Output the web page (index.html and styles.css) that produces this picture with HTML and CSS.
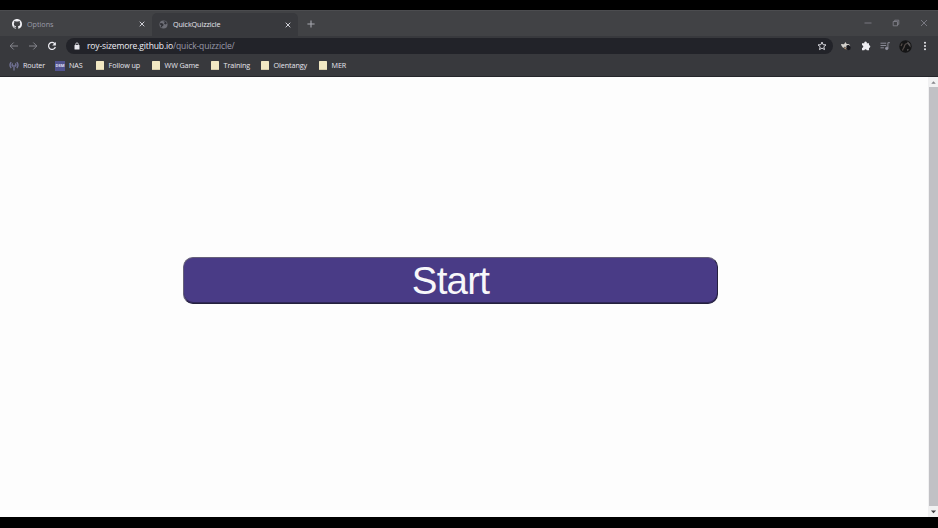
FILE: index.html
```html
<!DOCTYPE html>
<html lang="en">
<head>
<meta charset="utf-8">
<title>QuickQuizzicle</title>
<link rel="stylesheet" href="styles.css">
</head>
<body>
<div class="browser">
  <header class="tabs">
    <div class="tab first">
      <svg class="github" viewBox="0 0 16 16"><path fill="currentColor" d="M8 0C3.58 0 0 3.58 0 8c0 3.54 2.29 6.53 5.47 7.59.4.07.55-.17.55-.38v-1.49c-2.01.37-2.53-.49-2.69-.94-.09-.23-.48-.94-.82-1.13-.28-.15-.68-.52-.01-.53.63-.01 1.08.58 1.23.82.72 1.21 1.87.87 2.33.66.07-.52.28-.87.51-1.07-1.78-.2-3.64-.89-3.64-3.95 0-.87.31-1.59.82-2.15-.08-.2-.36-1.02.08-2.12 0 0 .67-.21 2.2.82a7.4 7.4 0 0 1 4 0c1.53-1.04 2.2-.82 2.2-.82.44 1.1.16 1.92.08 2.12.51.56.82 1.27.82 2.15 0 3.07-1.87 3.75-3.65 3.95.29.25.54.73.54 1.48v2.2c0 .21.15.46.55.38A8 8 0 0 0 16 8c0-4.42-3.58-8-8-8Z"/></svg>
      <span class="title dim">Options</span>
      <svg class="close" viewBox="0 0 6 6"><path d="m.7.7 4.6 4.6M5.3.7.7 5.3"/></svg>
    </div>
    <div class="tab active">
      <svg class="globe" viewBox="0 0 9 9"><circle cx="4.5" cy="4.5" r="4" fill="#6d6e76"/><path fill="#303137" d="m1.300 3 2 .3 1.300 1.300-.5 1.500-1 .2v1.400L1.500 6.500l1-.9-1.500-1zM4.300 1l2.800.8.7 1.900-1.500.7L5 3.500l.7-.9z"/></svg>
      <span class="title">QuickQuizzicle</span>
      <svg class="close" viewBox="0 0 6 6"><path d="m.7.7 4.6 4.6M5.3.7.7 5.3"/></svg>
    </div>
    <svg class="plus" viewBox="0 0 8 8"><path d="M4 .4v7.200M.4 4h7.200"/></svg>
    <div class="controls">
      <svg class="win" viewBox="0 0 8 8"><path d="M.5 4h7"/></svg>
      <svg class="win" viewBox="0 0 8 8"><path d="M1.200 2.500h4.300v4.300H1.200zM2.700 2.500V1.200h4.100v4.100H5.500"/></svg>
      <svg class="win" viewBox="0 0 8 8"><path d="m1 1 6 6m0-6L1 7"/></svg>
    </div>
  </header>
  <div class="toolbar">
    <svg class="nav" viewBox="0 0 10 10"><path d="M9 5H1.200M4.700 1.500 1.200 5l3.500 3.500"/></svg>
    <svg class="nav" viewBox="0 0 10 10"><path d="M1 5h7.800M5.300 1.500 8.800 5 5.300 8.500"/></svg>
    <svg class="nav reload" viewBox="0 0 10 10"><path d="M8 3A3.500 3.500 0 1 0 8.400 6"/><path class="solid" d="M8.900.9v3.700H5.200z"/></svg>
    <div class="address">
      <svg class="lock" viewBox="0 0 6 8"><path d="M1.700 3.500V2.200a1.300 1.300 0 0 1 2.600 0v1.300" fill="none" stroke="#e6e6ec" stroke-width=".8"/><rect x=".5" y="3" width="5" height="4.400" rx=".5" fill="#e6e6ec"/></svg>
      <span class="url">roy-sizemore.github.io<span>/quick-quizzicle/</span></span>
      <svg class="star" viewBox="0 0 10 10"><path d="m5 1 1.100 2.700 2.900.2-2.200 1.900.7 2.800L5 7.100 2.500 8.600l.7-2.800L1 3.900l2.900-.2z"/></svg>
    </div>
    <div class="tools">
      <svg class="tool eagle" viewBox="0 0 12 12"><path fill="#d3d1cc" d="m1 4 3 .2L5.500 2l1.200 2H9l1.500 2.500L8.700 8H6L5 6.500 3.200 8 1.500 5.800z"/><path fill="#17171d" d="m6.300 5.700 2-.9 2.500 1.700-.5 3-2.200.8L6.500 8.500z"/><path fill="#aa8f73" d="m3.700 7.500 2 .1 1 1.800-2-.4z"/></svg>
      <svg class="tool puzzle" viewBox="0 0 10 10"><path fill="#eeeef2" d="M1 2.200h2.300a1.300 1.300 0 1 1 2.500 0H8v2.100a1.300 1.300 0 1 1 0 2.600v2.300H5.800a1.300 1.300 0 0 0-2.500 0H1V6.900a1.300 1.300 0 0 0 0-2.600z"/></svg>
      <svg class="tool media" viewBox="0 0 10 10"><path d="M.5 2.200h5.700M.5 4.500h5.700M.5 6.800h3.400M7.900 7.400V1.700h2"/><circle cx="6.700" cy="7.400" r="1.200" fill="#9393a0"/></svg>
      <svg class="tool avatar" viewBox="0 0 13 13"><circle cx="6.500" cy="6.500" r="6.200" fill="#151516"/><path d="M3.500 10.500c.5-2 1.500-2.500 2-4.500.3-1.500 1.500-2.500 3-2.500M2 6l1.200-2.500" fill="none" stroke="#544c49" stroke-width="1.200"/><path d="m8.700 1.600 2.600 2.600.3 3.200-1.500-1.700-2-2.500zM8 9l2 .5-1.500 1.800z" fill="#5b5859"/></svg>
      <svg class="tool dots" viewBox="0 0 4 10"><circle cx="2" cy="1.700" r="1"/><circle cx="2" cy="5" r="1"/><circle cx="2" cy="8.300" r="1"/></svg>
    </div>
  </div>
  <nav class="bookmarks">
    <div class="bookmark router"><svg viewBox="0 0 10 10"><path d="M2.200 1.200Q-.2 4 2.200 7M3.700 2.500q-1.200 1.500 0 3M7.800 1.200q2.400 2.800 0 5.800M6.300 2.500q1.200 1.500 0 3M5 4v5.500" fill="none" stroke="#74759a" stroke-width="1.300"/></svg><span>Router</span></div>
    <div class="bookmark nas"><b>DSM</b><span>NAS</span></div>
    <div class="bookmark follow"><i></i><span>Follow up</span></div>
    <div class="bookmark game"><i></i><span>WW Game</span></div>
    <div class="bookmark training"><i></i><span>Training</span></div>
    <div class="bookmark olentangy"><i></i><span>Olentangy</span></div>
    <div class="bookmark mer"><i></i><span>MER</span></div>
  </nav>
  <div class="viewport">
    <main><button class="start" type="button">Start</button></main>
    <div class="scrollbar">
      <svg class="arrow up" viewBox="0 0 8 8"><path d="m2 5.500 2-2.200 2 2.200z"/></svg>
      <div class="thumb"></div>
      <svg class="arrow down" viewBox="0 0 8 8"><path d="m1.700 3 2.300 2.500L6.300 3z"/></svg>
    </div>
  </div>
</div>
</body>
</html>
```
FILE: styles.css
```css
* { box-sizing: border-box; }
body { margin: 0; background: #000; font-family: "Open Sans", "Noto Sans", sans-serif; font-size: 7.2px; color: #e6e6ee; overflow: hidden; }
svg { display: block; flex: none; }
.browser { height: 528px; padding: 10px 0 11px; display: flex; flex-direction: column; }
.tabs { height: 26px; flex: none; display: flex; align-items: center; background: #414245; border-top: 1px solid #4b4c4f; }
.tab { height: 23px; display: flex; align-items: center; }
.first { width: 152px; padding: 1px 7px 0 12px; }
.active { width: 146px; align-self: flex-end; padding: 0 7px; background: #38393d; border-radius: 5px 5px 0 0; }
.github { width: 10px; height: 10px; color: #f0f0f5; }
.globe { width: 9px; height: 9px; }
.title { margin-left: 5px; flex: 1; line-height: 10px; padding-bottom: 1px; white-space: nowrap; letter-spacing: -.09px; }
.dim { color: #9a9ba7; letter-spacing: 0; }
.close { width: 6px; height: 6px; fill: none; stroke: #cfcfd6; stroke-width: 1; }
.plus { width: 8px; height: 8px; margin: 1px 0 0 9px; fill: none; stroke: #a7a8b0; stroke-width: 1.1; }
.controls { margin-left: auto; display: flex; gap: 20px; padding: 0 10px 1px 0; }
.win { width: 8px; height: 8px; fill: none; stroke: #868791; stroke-width: .8; }
.toolbar { height: 20px; flex: none; display: flex; align-items: center; background: #38393d; padding-left: 9px; }
.nav { width: 10px; height: 10px; margin-right: 9px; fill: none; stroke: #85868d; stroke-width: 1; }
.reload { stroke: #ececf2; stroke-width: 1.2; }
.solid { fill: #ececf2; stroke: none; }
.address { width: 767px; height: 16px; border-radius: 8px; background: #222329; display: flex; align-items: center; padding: 0 6px 0 8px; }
.lock { width: 6px; height: 8px; }
.url { margin-left: 7px; flex: 1; font-size: 8.5px; letter-spacing: -.13px; line-height: 16px; color: #f0f0f7; }
.url span { color: #9a9ba9; }
.star { width: 10px; height: 10px; fill: none; stroke: #d7d7dd; stroke-width: 1; }
.tools { margin-left: 7px; display: flex; align-items: center; }
.tool { width: 10px; height: 10px; }
.eagle { width: 12px; height: 12px; margin-right: 9px; }
.puzzle { margin-right: 9px; }
.media { margin-right: 9px; fill: none; stroke: #9393a0; stroke-width: .9; }
.avatar { width: 13px; height: 13px; margin-right: 11px; }
.dots { width: 4px; fill: #e9e9ee; }
.bookmarks { height: 21px; flex: none; display: flex; align-items: center; background: #38393d; padding: 0 0 1px 9px; border-bottom: 1px solid #25262b; }
.bookmark { height: 19px; display: flex; align-items: center; line-height: 18px; white-space: nowrap; letter-spacing: -.09px; }
.bookmark span { padding-bottom: 1px; }
.bookmark svg { width: 10px; height: 10px; margin-right: 4px; }
.bookmark i { width: 8px; height: 9px; margin-right: 5px; background: #f1e8c3; border-radius: .5px; border-bottom: 1px solid #d6cdaa; }
.bookmark b { width: 10px; height: 10px; margin-right: 4px; background: #50528f; color: #e2e2f5; font-size: 4px; line-height: 10px; text-align: center; letter-spacing: 0; }
.router { width: 46px; }
.nas { width: 40.6px; }
.follow { width: 56px; }
.game { width: 59px; }
.training { width: 50px; }
.olentangy { width: 58px; }
.viewport { height: 440px; display: flex; background: #fdfdfd; }
main { flex: 1; display: flex; justify-content: center; align-items: flex-start; padding: 180px 27px 0 0; }
.start { width: 535px; height: 47px; padding: 0; border: 1px solid; border-color: #666079 #25213e #25213e #666079; border-radius: 10px; box-shadow: inset 0 -1px #302858; background: #493b86; color: #f7f7fa; font: 38.5px/45px "Liberation Sans", Arial, sans-serif; letter-spacing: -.8px; }
.scrollbar { width: 10px; background: #f1f1f2; display: flex; flex-direction: column; align-items: center; }
.arrow { width: 9px; height: 10px; fill: #3c3c3f; }
.up { fill: #85858a; }
.down { height: 11px; }
.thumb { width: 9px; flex: 1; background: #c1c1c5; }
```
